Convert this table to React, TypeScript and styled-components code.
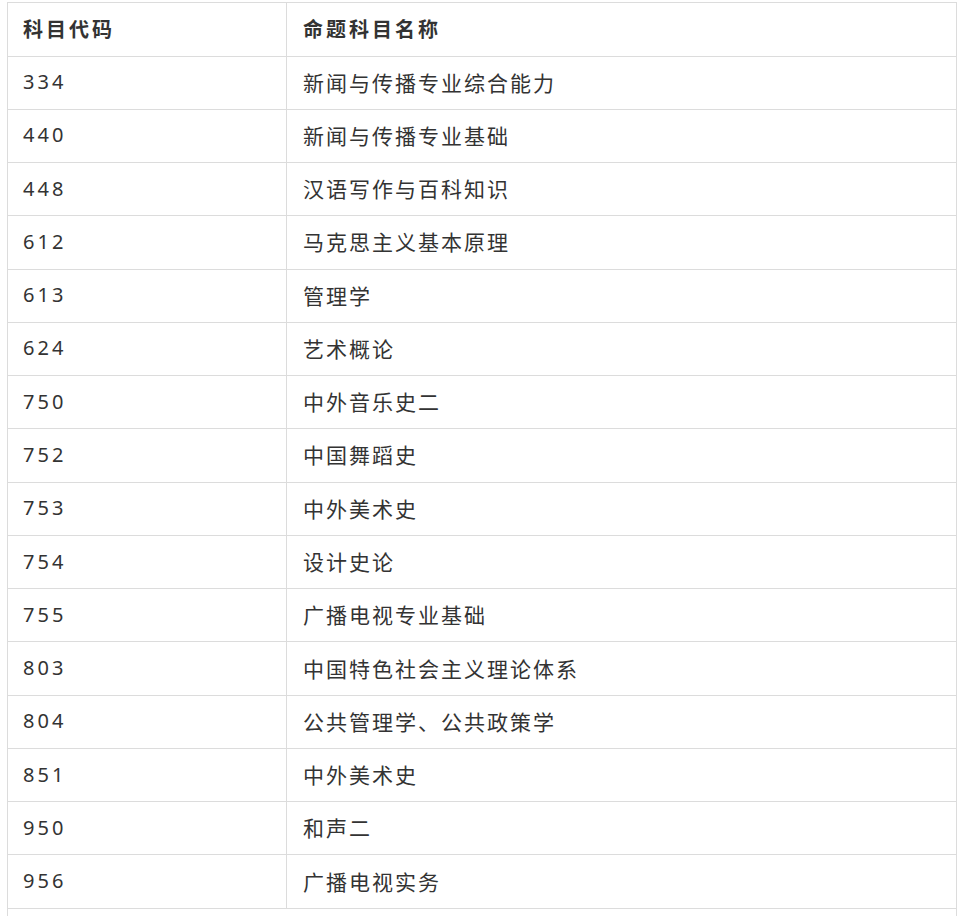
import styled, { createGlobalStyle } from "styled-components";

const subjects: [string, string][] = [
  ["334", "新闻与传播专业综合能力"],
  ["440", "新闻与传播专业基础"],
  ["448", "汉语写作与百科知识"],
  ["612", "马克思主义基本原理"],
  ["613", "管理学"],
  ["624", "艺术概论"],
  ["750", "中外音乐史二"],
  ["752", "中国舞蹈史"],
  ["753", "中外美术史"],
  ["754", "设计史论"],
  ["755", "广播电视专业基础"],
  ["803", "中国特色社会主义理论体系"],
  ["804", "公共管理学、公共政策学"],
  ["851", "中外美术史"],
  ["950", "和声二"],
  ["956", "广播电视实务"],
];

const GlobalStyle = createGlobalStyle`
  html, body {
    margin: 0;
    padding: 0;
    background: #ffffff;
    overflow: hidden;
  }
  body {
    font-family: "Noto Sans", "Noto Sans CJK SC", sans-serif;
    color: #333333;
  }
`;

const App: React.FC = () => {
  return (
    <>
      <GlobalStyle />
      <Page>
        <Table>
          <HeaderRow>
            <Cell $first>科目代码</Cell>
            <Cell>命题科目名称</Cell>
          </HeaderRow>
          {subjects.map(([code, name]) => (
            <Row key={code + name}>
              <Cell $first>
                <Code>{code}</Code>
              </Cell>
              <Cell>{name}</Cell>
            </Row>
          ))}
          {/* next row, cut off by the frame */}
          <Row>
            <Cell $span />
          </Row>
        </Table>
      </Page>
    </>
  );
};

export default App;

const Page = styled.div`
  padding: 2px 6px 0 7px;
`;

const Table = styled.div`
  width: 950px;
  box-sizing: border-box;
  border-top: 1px solid #dcdcdc;
  border-left: 1px solid #dcdcdc;
  border-right: 1px solid #dcdcdc;
`;

const Row = styled.div`
  display: grid;
  grid-template-columns: 279px 1fr;
  height: 53.27px;
  box-sizing: border-box;
  border-bottom: 1px solid #dcdcdc;
  font-size: 21px;
  letter-spacing: 2px;
  color: #333333;
`;

const HeaderRow = styled(Row)`
  height: 53.5px;
  font-size: 20px;
  font-weight: 700;
  letter-spacing: 3px;
`;

const Cell = styled.div<{ $first?: boolean; $span?: boolean }>`
  display: flex;
  align-items: center;
  grid-column: ${({ $span }) => ($span ? "1 / -1" : "auto")};
  padding-left: ${({ $first }) => ($first ? "15px" : "16px")};
  padding-bottom: 2px;
  box-sizing: border-box;
  border-right: ${({ $first }) => ($first ? "1px solid #dcdcdc" : "none")};
  white-space: nowrap;
`;

const Code = styled.span`
  font-size: 20px;
  letter-spacing: 3px;
`;
